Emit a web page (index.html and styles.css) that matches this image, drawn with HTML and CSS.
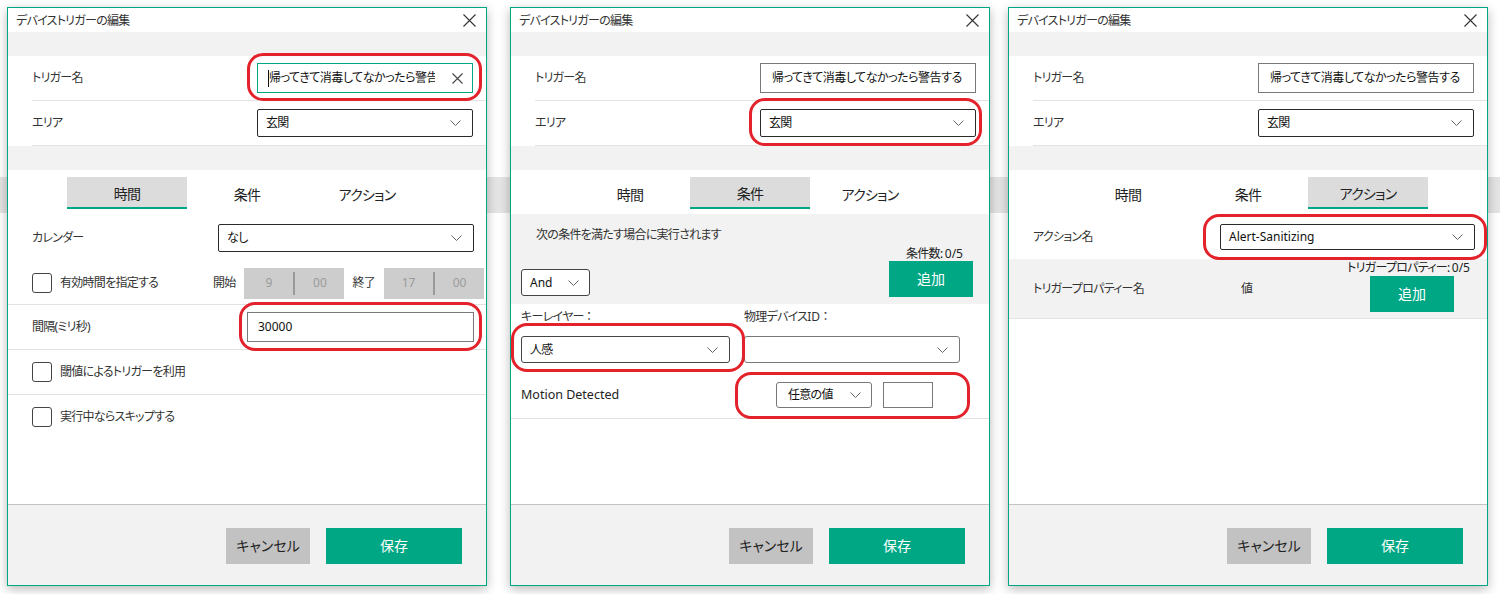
FILE: index.html
```html
<!DOCTYPE html>
<html lang="ja">
<head>
<meta charset="utf-8">
<title>デバイストリガーの編集</title>
<link rel="stylesheet" href="styles.css">
</head>
<body>
<div class="stage">

  <!-- Dialog 1: 時間 -->
  <section class="dialog d1">
    <header class="titlebar">
      <span class="title">デバイストリガーの編集</span>
      <svg class="close" width="13" height="13" viewBox="0 0 13 13"><path d="M0.5 0.5L12.5 12.5M12.5 0.5L0.5 12.5" stroke="#333" stroke-width="1.1" fill="none"/></svg>
    </header>
    <div class="band"></div>
    <div class="names">
      <div class="nrow">
        <span class="label">トリガー名</span>
        <div class="input name-input focus">
          <span class="caret"></span>
          <span class="itext">帰ってきて消毒してなかったら警告する</span>
          <svg class="clear" width="11" height="11" viewBox="0 0 11 11"><path d="M0.5 0.5L10.5 10.5M10.5 0.5L0.5 10.5" stroke="#444" stroke-width="1.1" fill="none"/></svg>
        </div>
      </div>
      <div class="nrow">
        <span class="label">エリア</span>
        <div class="select area-select"><span>玄関</span><svg class="chev" width="11" height="6" viewBox="0 0 11 6"><path d="M0.5 0.5L5.5 5.5L10.5 0.5" stroke="#666" fill="none"/></svg></div>
      </div>
    </div>
    <div class="band"></div>
    <nav class="tabs"><span class="tab active">時間</span><span class="tab">条件</span><span class="tab">アクション</span></nav>
    <div class="content time-content">
      <div class="row cal-row">
        <span class="label">カレンダー</span>
        <div class="select cal-select"><span>なし</span><svg class="chev" width="11" height="6" viewBox="0 0 11 6"><path d="M0.5 0.5L5.5 5.5L10.5 0.5" stroke="#666" fill="none"/></svg></div>
      </div>
      <div class="row time-row">
        <span class="box"></span>
        <span class="time-label">有効時間を指定する</span>
        <span class="tword">開始</span>
        <div class="tbox latin"><span>9</span><i></i><span>00</span></div>
        <span class="tword end">終了</span>
        <div class="tbox latin"><span>17</span><i></i><span>00</span></div>
      </div>
      <div class="row int-row">
        <span class="label">間隔(ミリ秒)</span>
        <div class="input int-input latin">30000</div>
      </div>
      <div class="row chk-row">
        <span class="box"></span><span>閾値によるトリガーを利用</span>
      </div>
      <div class="row chk-row last">
        <span class="box"></span><span>実行中ならスキップする</span>
      </div>
    </div>
    <footer class="footer"><button class="btn cancel">キャンセル</button><button class="btn save">保存</button></footer>
    <div class="mark m-a"></div>
    <div class="mark m-b"></div>
  </section>

  <!-- Dialog 2: 条件 -->
  <section class="dialog d2">
    <header class="titlebar">
      <span class="title">デバイストリガーの編集</span>
      <svg class="close" width="13" height="13" viewBox="0 0 13 13"><path d="M0.5 0.5L12.5 12.5M12.5 0.5L0.5 12.5" stroke="#333" stroke-width="1.1" fill="none"/></svg>
    </header>
    <div class="band"></div>
    <div class="names">
      <div class="nrow">
        <span class="label">トリガー名</span>
        <div class="input name-input"><span class="itext">帰ってきて消毒してなかったら警告する</span></div>
      </div>
      <div class="nrow">
        <span class="label">エリア</span>
        <div class="select area-select"><span>玄関</span><svg class="chev" width="11" height="6" viewBox="0 0 11 6"><path d="M0.5 0.5L5.5 5.5L10.5 0.5" stroke="#666" fill="none"/></svg></div>
      </div>
    </div>
    <div class="band"></div>
    <nav class="tabs"><span class="tab">時間</span><span class="tab active">条件</span><span class="tab">アクション</span></nav>
    <div class="content">
      <div class="cond-panel">
        <div class="cond-text">次の条件を満たす場合に実行されます</div>
        <div class="cond-bottom">
          <div class="select and-select"><span class="latin">And</span><svg class="chev" width="11" height="6" viewBox="0 0 11 6"><path d="M0.5 0.5L5.5 5.5L10.5 0.5" stroke="#666" fill="none"/></svg></div>
          <div class="cond-right">
            <span class="count">条件数: <span class="latin">0/5</span></span>
            <button class="btn add">追加</button>
          </div>
        </div>
      </div>
      <div class="layer-grid">
        <span>キーレイヤー ：</span>
        <span>物理デバイス<span class="latin">ID</span> ：</span>
        <div class="select layer-select"><span>人感</span><svg class="chev" width="11" height="6" viewBox="0 0 11 6"><path d="M0.5 0.5L5.5 5.5L10.5 0.5" stroke="#666" fill="none"/></svg></div>
        <div class="select device-select"><span></span><svg class="chev" width="11" height="6" viewBox="0 0 11 6"><path d="M0.5 0.5L5.5 5.5L10.5 0.5" stroke="#666" fill="none"/></svg></div>
      </div>
      <div class="motion-row">
        <span class="motion-label latin">Motion Detected</span>
        <div class="select any-select"><span>任意の値</span><svg class="chev" width="11" height="6" viewBox="0 0 11 6"><path d="M0.5 0.5L5.5 5.5L10.5 0.5" stroke="#666" fill="none"/></svg></div>
        <div class="input small-input"></div>
      </div>
    </div>
    <footer class="footer"><button class="btn cancel">キャンセル</button><button class="btn save">保存</button></footer>
    <div class="mark m-c"></div>
    <div class="mark m-d"></div>
    <div class="mark m-e"></div>
  </section>

  <!-- Dialog 3: アクション -->
  <section class="dialog d3">
    <header class="titlebar">
      <span class="title">デバイストリガーの編集</span>
      <svg class="close" width="13" height="13" viewBox="0 0 13 13"><path d="M0.5 0.5L12.5 12.5M12.5 0.5L0.5 12.5" stroke="#333" stroke-width="1.1" fill="none"/></svg>
    </header>
    <div class="band"></div>
    <div class="names">
      <div class="nrow">
        <span class="label">トリガー名</span>
        <div class="input name-input"><span class="itext">帰ってきて消毒してなかったら警告する</span></div>
      </div>
      <div class="nrow">
        <span class="label">エリア</span>
        <div class="select area-select"><span>玄関</span><svg class="chev" width="11" height="6" viewBox="0 0 11 6"><path d="M0.5 0.5L5.5 5.5L10.5 0.5" stroke="#666" fill="none"/></svg></div>
      </div>
    </div>
    <div class="band"></div>
    <nav class="tabs"><span class="tab">時間</span><span class="tab">条件</span><span class="tab active">アクション</span></nav>
    <div class="content">
      <div class="action-row">
        <span class="label">アクション名</span>
        <div class="select action-select"><span class="latin">Alert-Sanitizing</span><svg class="chev" width="11" height="6" viewBox="0 0 11 6"><path d="M0.5 0.5L5.5 5.5L10.5 0.5" stroke="#666" fill="none"/></svg></div>
      </div>
      <div class="prop-panel">
        <span class="prop-name">トリガープロパティー名</span>
        <span class="prop-val">値</span>
        <div class="prop-right">
          <span class="count">トリガープロパティー: <span class="latin">0/5</span></span>
          <button class="btn add">追加</button>
        </div>
      </div>
    </div>
    <footer class="footer"><button class="btn cancel">キャンセル</button><button class="btn save">保存</button></footer>
    <div class="mark m-f"></div>
  </section>

</div>
</body>
</html>
```

FILE: styles.css
```css
html, body {
  margin: 0;
  padding: 0;
}
body {
  width: 1500px;
  height: 594px;
  overflow: hidden;
  background: linear-gradient(to bottom, #ffffff 0, #ffffff 177px, #e4e4e4 177px, #e4e4e4 213px, #ffffff 213px);
  font-family: "Noto Sans", "Noto Sans CJK JP", sans-serif;
  font-feature-settings: "palt" 1;
  font-size: 12px;
  line-height: 16px;
  letter-spacing: -0.06em;
  color: #333;
}
.latin { letter-spacing: 0; }

.stage {
  display: flex;
  align-items: flex-start;
  padding: 7px 0 0 7px;
}

.dialog {
  position: relative;
  width: 480px;
  height: 579px;
  box-sizing: border-box;
  border: 1px solid #00a785;
  background: #fff;
  display: flex;
  flex-direction: column;
  box-shadow: 0 3px 10px rgba(0, 0, 0, 0.28);
}
.d2 { margin-left: 23px; }
.d3 { margin-left: 18px; }

.titlebar {
  height: 24px;
  flex: none;
  display: flex;
  align-items: center;
  justify-content: space-between;
  padding: 0 10px 0 8px;
  color: #333;
}
.title { padding-top: 1px; }
.close { display: block; margin-top: 1px; }

.band {
  height: 24px;
  flex: none;
  background: #f2f2f2;
}

.names { flex: none; }
.nrow {
  height: 44px;
  margin-left: 24px;
  padding-right: 13px;
  border-bottom: 1px solid #e2e2e2;
  display: flex;
  align-items: center;
  justify-content: space-between;
}

.label { color: #333; }

.input, .select {
  box-sizing: border-box;
  display: flex;
  align-items: center;
  background: #fff;
  color: #111;
}
.input {
  border: 1px solid #7a7a7a;
}
.select {
  border: 1px solid #2b2b2b;
  border-radius: 2px;
  justify-content: space-between;
  padding: 0 11px 0 8px;
}
.chev { display: block; flex: none; }

.name-input {
  width: 216px;
  height: 30px;
  padding: 0 9px 0 11px;
  overflow: hidden;
  letter-spacing: -0.04em;
}
.name-input.focus {
  border-color: #00a785;
  padding-left: 10px;
}
.itext {
  flex: 1;
  overflow: hidden;
  white-space: nowrap;
}
.name-input.focus .itext { margin-right: 17px; }
.caret {
  width: 1px;
  height: 17px;
  background: #111;
  flex: none;
}
.clear { display: block; flex: none; }

.area-select {
  width: 216px;
  height: 28px;
}

.tabs {
  flex: none;
  height: 39px;
  box-sizing: border-box;
  padding: 7px 0 0 59px;
  display: flex;
}
.tab {
  width: 120px;
  height: 32px;
  box-sizing: border-box;
  display: flex;
  align-items: center;
  justify-content: center;
  padding-top: 3px;
  font-size: 14px;
  color: #222;
}
.tab.active {
  background: #dcdcdc;
  border-bottom: 2px solid #00a785;
}

.content { flex: 1; }

/* time tab */
.time-content { padding-top: 5px; }
.row {
  display: flex;
  align-items: center;
  padding: 0 12px 0 24px;
}
.cal-row { height: 48px; justify-content: space-between; }
.cal-select { width: 256px; height: 28px; }

.time-row {
  height: 42px;
  padding-right: 2px;
  border-bottom: 1px solid #e2e2e2;
}
.box {
  width: 20px;
  height: 20px;
  box-sizing: border-box;
  border: 1px solid #444;
  border-radius: 3px;
  margin-right: 8px;
  flex: none;
}
.time-label { flex: 1; }
.tword { margin-right: 9px; }
.tword.end { margin-left: 8px; }
.tbox {
  width: 100px;
  height: 31px;
  background: #cdcdcd;
  display: flex;
  align-items: center;
}
.tbox span {
  flex: 1;
  text-align: center;
  color: #9b9b9b;
}
.tbox i {
  width: 2px;
  height: 23px;
  background: #9a9a9a;
}

.int-row {
  height: 44px;
  justify-content: space-between;
  border-bottom: 1px solid #e2e2e2;
}
.int-input {
  width: 227px;
  height: 30px;
  padding-left: 10px;
  color: #111;
}
.chk-row {
  height: 44px;
  border-bottom: 1px solid #e2e2e2;
}
.chk-row.last { border-bottom: 0; }

/* condition tab */
.cond-panel {
  margin-top: 5px;
  height: 90px;
  box-sizing: border-box;
  background: #f2f2f2;
  padding: 13px 16px 7px 10px;
}
.cond-text { padding-left: 15px; }
.cond-bottom {
  display: flex;
  justify-content: space-between;
  align-items: flex-end;
  margin-top: 3px;
}
.and-select {
  width: 69px;
  height: 27px;
  margin-bottom: 1px;
  padding-right: 10px;
  border-color: #444;
  border-radius: 3px;
}
.cond-right {
  display: flex;
  flex-direction: column;
  align-items: flex-end;
}
.cond-right .count { margin-right: 10px; }
.count { line-height: 15px; color: #222; }

.btn {
  border: 0;
  margin: 0;
  padding: 0;
  font: inherit;
  font-size: 14px;
  height: 36px;
  cursor: pointer;
}
.add {
  width: 84px;
  background: #00a785;
  color: #fff;
}

.layer-grid {
  display: grid;
  grid-template-columns: 209px 216px;
  column-gap: 14px;
  row-gap: 11px;
  padding: 5px 0 0 10px;
}
.layer-select, .device-select {
  height: 27px;
  border-color: #444;
  border-radius: 3px;
}
.device-select { border-color: #777; }

.motion-row {
  display: flex;
  align-items: center;
  padding: 19px 0 10px 10px;
  border-bottom: 1px solid #e2e2e2;
}
.motion-label { width: 255px; flex: none; color: #222; font-size: 12.5px; }
.any-select {
  width: 96px;
  height: 26px;
  padding: 0 10px 0 11px;
  border-color: #777;
  border-radius: 3px;
}
.small-input {
  width: 50px;
  height: 26px;
  margin-left: 11px;
}

/* action tab */
.action-row {
  display: flex;
  align-items: center;
  justify-content: space-between;
  padding: 15px 12px 9px 24px;
}
.action-select { width: 255px; height: 26px; }

.prop-panel {
  height: 60px;
  box-sizing: border-box;
  background: #f2f2f2;
  border-bottom: 1px solid #e2e2e2;
  display: flex;
  align-items: center;
  padding: 0 17px 0 24px;
}
.prop-name { width: 208px; flex: none; }
.prop-val { flex: 1; }
.prop-right {
  align-self: flex-start;
  padding-top: 1px;
  display: flex;
  flex-direction: column;
  align-items: flex-end;
  gap: 1px;
}
.prop-right .add { margin-right: 16px; }

/* footer */
.footer {
  flex: none;
  height: 81px;
  box-sizing: border-box;
  border-top: 1px solid #c4c4c4;
  background: #f2f2f2;
  display: flex;
  justify-content: flex-end;
  align-items: flex-start;
  gap: 16px;
  padding: 23px 24px 0 0;
}
.cancel {
  width: 84px;
  background: #c2c2c2;
  color: #222;
}
.save {
  width: 136px;
  background: #00a785;
  color: #fff;
}

/* red annotation rings drawn over the screenshot */
.mark {
  position: absolute;
  box-sizing: border-box;
  border: 3px solid #e3222b;
  border-radius: 16px;
  pointer-events: none;
}
.m-a { left: 239px; top: 45px; width: 235px; height: 48px; }
.m-b { left: 231px; top: 294px; width: 243px; height: 49px; }
.m-c { left: 238px; top: 90px; width: 233px; height: 48px; }
.m-d { left: 0; top: 315px; width: 234px; height: 49px; }
.m-e { left: 224px; top: 364px; width: 235px; height: 47px; }
.m-f { left: 194px; top: 206px; width: 284px; height: 46px; }
```
